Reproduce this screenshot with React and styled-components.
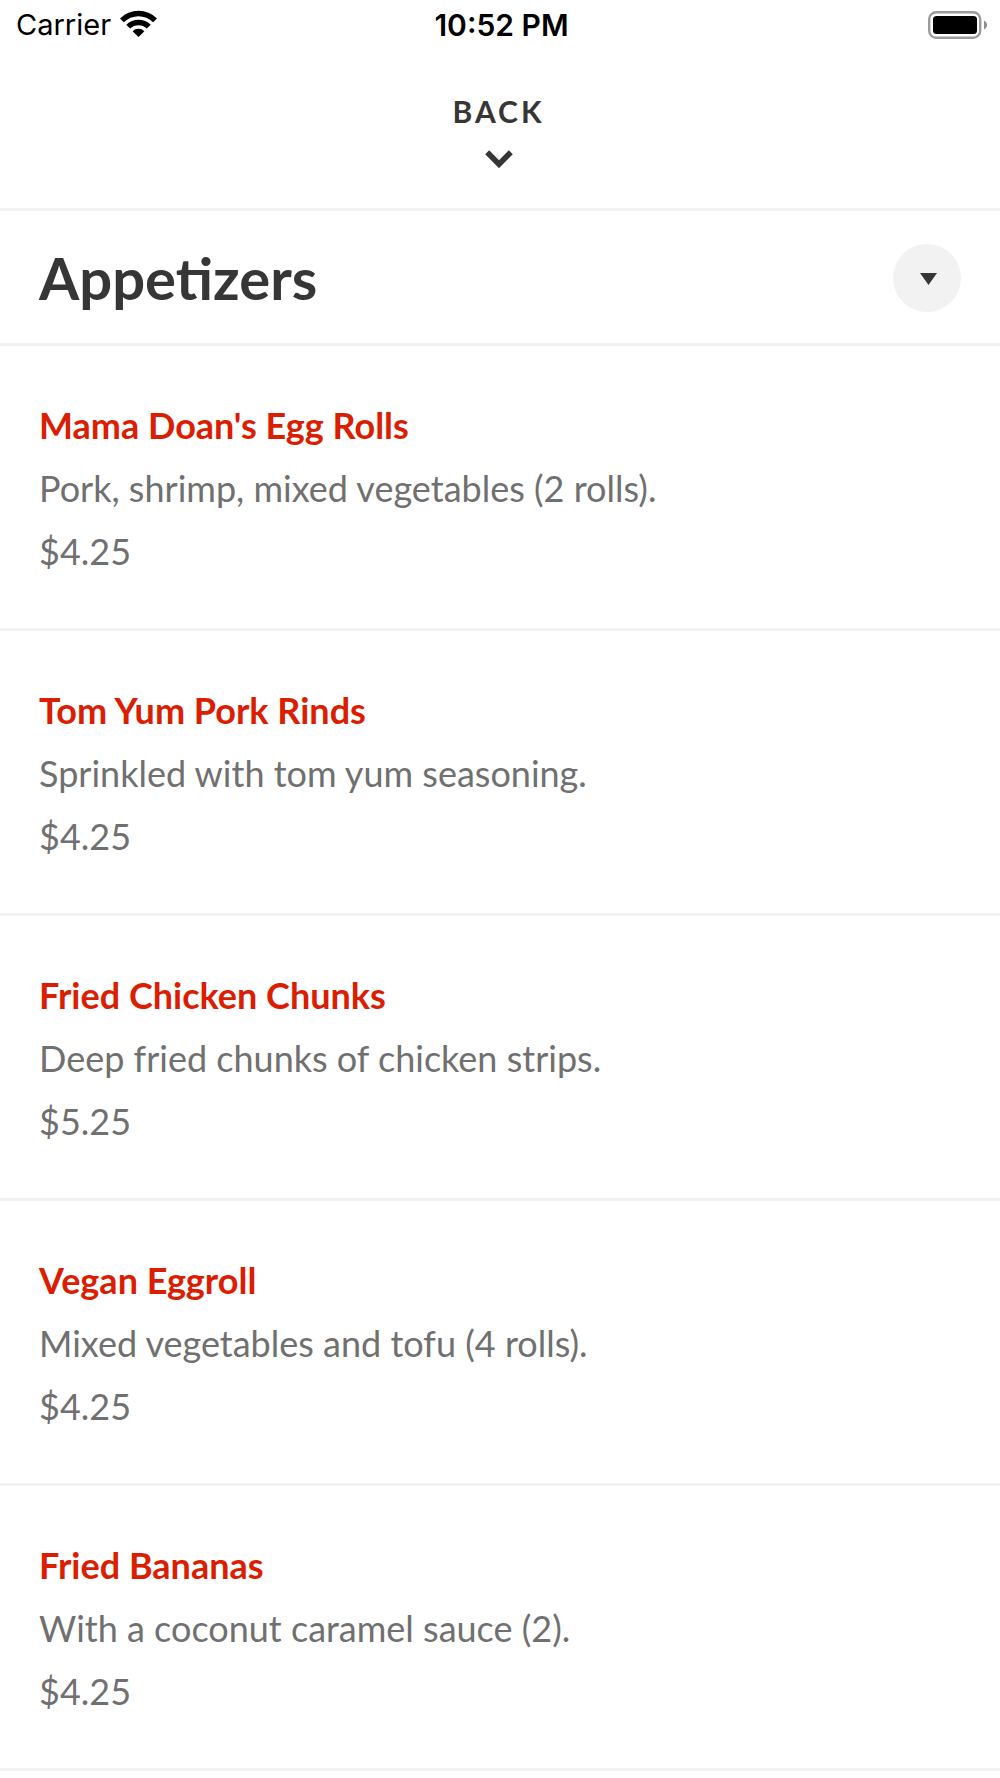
import React from 'react';
import styled, { createGlobalStyle } from 'styled-components';

const GlobalStyle = createGlobalStyle`
  * {
    box-sizing: border-box;
  }

  body {
    margin: 0;
    background-color: #fff;
    color: #363636;
    font-family: Lato, sans-serif;
  }
`;

const StatusBar = styled.div`
  display: grid;
  grid-template-columns: 1fr auto 1fr;
  align-items: center;
  height: 50px;
  padding: 0 13px 0 16px;
  color: #000;
  font-family: Inter, sans-serif;
  font-size: 29px;
  line-height: 50px;
`;

const Carrier = styled.div`
  display: flex;
  align-items: center;
  gap: 9px;
`;

const Clock = styled.time`
  font-size: 30px;
  font-weight: 600;
`;

const BatteryIcon = styled.svg`
  justify-self: end;
`;

const BackButton = styled.button`
  display: flex;
  flex-direction: column;
  align-items: center;
  gap: 21px;
  width: 100%;
  height: 161px;
  padding: 43px 3px 0 0;
  border: 0;
  border-bottom: 3px solid #f2f2f2;
  background: none;
  color: inherit;
  font-family: inherit;
  font-size: 30px;
  font-weight: 700;
  line-height: 36px;
  letter-spacing: 3px;
  cursor: pointer;
`;

const CategoryHeader = styled.header`
  display: flex;
  align-items: center;
  justify-content: space-between;
  height: 135px;
  padding: 2px 39px 0;
  border-bottom: 3px solid #f2f2f2;
`;

const CategoryTitle = styled.h1`
  margin: 0;
  font-size: 58px;
  font-weight: 700;
  line-height: 72px;
`;

const ToggleButton = styled.button`
  display: flex;
  align-items: center;
  justify-content: center;
  width: 68px;
  height: 68px;
  padding: 2px 0 0 2px;
  border: 0;
  border-radius: 50%;
  background-color: #f2f2f2;
  color: inherit;
  cursor: pointer;
`;

const MenuList = styled.ul`
  margin: 0;
  padding: 0;
  list-style: none;
`;

const MenuItemBlock = styled.li`
  height: 285px;
  padding: 48px 39px 0;
  border-bottom: 3px solid #f2f2f2;
  color: #707070;
  font-size: 36px;
  line-height: 63px;

  h2,
  p {
    margin: 0;
    font-size: inherit;
  }

  h2 {
    color: #db1d02;
    font-weight: 700;
  }
`;

const items = [
  {
    name: "Mama Doan's Egg Rolls",
    description: 'Pork, shrimp, mixed vegetables (2 rolls).',
    price: '$4.25',
  },
  {
    name: 'Tom Yum Pork Rinds',
    description: 'Sprinkled with tom yum seasoning.',
    price: '$4.25',
  },
  {
    name: 'Fried Chicken Chunks',
    description: 'Deep fried chunks of chicken strips.',
    price: '$5.25',
  },
  {
    name: 'Vegan Eggroll',
    description: 'Mixed vegetables and tofu (4 rolls).',
    price: '$4.25',
  },
  {
    name: 'Fried Bananas',
    description: 'With a coconut caramel sauce (2).',
    price: '$4.25',
  },
];

const MenuItem = ({ name, description, price }) => {
  return (
    <MenuItemBlock>
      <h2>{name}</h2>
      <p>{description}</p>
      <p>{price}</p>
    </MenuItemBlock>
  );
};

const App = () => {
  return (
    <>
      <GlobalStyle />
      <StatusBar>
        <Carrier>
          <span>Carrier</span>
          <svg width="37" height="32" viewBox="0 0 37 32" aria-hidden="true">
            <path d="M0 9.5a26 26 0 0 1 37 0l-3.9 3.8a20.6 20.6 0 0 0-29.2 0z" />
            <path d="M6.3 15.8a17.3 17.3 0 0 1 24.4 0l-3.8 3.8a12 12 0 0 0-16.8 0z" />
            <path d="M18.5 28l-5.9-5.8a8.4 8.4 0 0 1 11.8 0z" />
          </svg>
        </Carrier>
        <Clock>10:52 PM</Clock>
        <BatteryIcon width="59" height="28" viewBox="0 0 59 28" aria-hidden="true">
          <rect x="1.2" y="1.2" width="51" height="25.6" rx="7" fill="none" stroke="#9b9b9b" strokeWidth="2.4" />
          <rect x="5" y="5" width="44" height="18" rx="3.5" />
          <path d="M56 9.5c4 2 4 7 0 9z" fill="#8c8c8c" />
        </BatteryIcon>
      </StatusBar>
      <BackButton type="button">
        <span>BACK</span>
        <svg width="28" height="18" viewBox="0 0 28 18" aria-hidden="true">
          <path d="M2.2 2.2L14 14.2 25.8 2.2" fill="none" stroke="#363636" strokeWidth="5.6" />
        </svg>
      </BackButton>
      <main>
        <CategoryHeader>
          <CategoryTitle>Appetizers</CategoryTitle>
          <ToggleButton type="button" aria-label="Choose category">
            <svg width="17" height="12" viewBox="0 0 17 12" aria-hidden="true">
              <path d="M0 0h17L8.5 12z" fill="#363636" />
            </svg>
          </ToggleButton>
        </CategoryHeader>
        <MenuList>
          {items.map((item) => (
            <MenuItem key={item.name} {...item} />
          ))}
        </MenuList>
      </main>
    </>
  );
};

export default App;
